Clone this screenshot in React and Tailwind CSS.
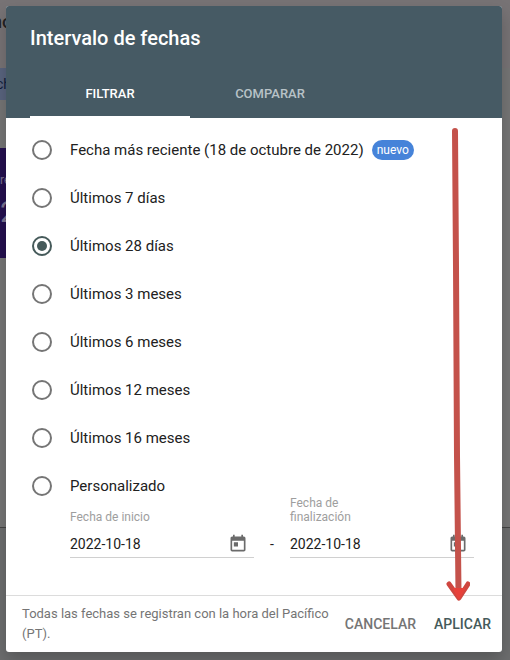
import React, { useState } from 'react';
import { MdToday } from 'react-icons/md';

const TABS = ['Filtrar', 'Comparar'];

const OPTIONS = [
    { id: 'latest', label: 'Fecha más reciente (18 de octubre de 2022)', badge: 'nuevo' },
    { id: '7d', label: 'Últimos 7 días' },
    { id: '28d', label: 'Últimos 28 días' },
    { id: '3m', label: 'Últimos 3 meses' },
    { id: '6m', label: 'Últimos 6 meses' },
    { id: '12m', label: 'Últimos 12 meses' },
    { id: '16m', label: 'Últimos 16 meses' },
    { id: 'custom', label: 'Personalizado' },
];

// The page scrolled partly out of view under the dialog
const PageBehind = () => (
    <div className="flex min-h-screen flex-col overflow-hidden bg-[#757575]" aria-hidden="true">
        <div className="-ml-2 flex h-[68px] items-start bg-[#777375] pt-2 text-lg font-medium text-[#222]">
            <span>no</span>
        </div>
        <div className="-ml-1 flex h-8 w-24 items-center bg-[#59647e] text-sm text-[#101c38]">ch</div>
        <div className="mt-12 h-[110px] w-40 bg-[#24104f] pt-6 text-[#7b7392]">
            <p className="text-xs leading-4">re</p>
            <p className="mt-2 text-3xl leading-8">2</p>
        </div>
        <div className="h-[270px] border-b border-[#444]" />
        <div className="grow bg-[#6c6d6e]" />
    </div>
);

const OptionRow = ({ option, checked, onSelect }) => (
    <label className="flex h-12 cursor-pointer items-center text-[15px] text-[#212121]">
        <input
            type="radio"
            name="range"
            checked={checked}
            onChange={() => onSelect(option.id)}
            className="mr-[18px] grid size-5 shrink-0 appearance-none place-items-center rounded-full border-2 border-[#757575] before:size-[10px] before:rounded-full checked:border-[#455a5a] checked:before:bg-[#455a5a]"
        />
        {option.label}
        {option.badge && (
            <span className="ml-2 flex h-5 items-center rounded-full bg-[#4683d9] px-[5px] text-xs text-white">
                {option.badge}
            </span>
        )}
    </label>
);

const DateField = ({ id, label, value, onChange }) => (
    <div className="min-w-0 flex-1">
        <label htmlFor={id} className="block max-w-[90px] text-xs leading-[14px] text-[#9e9e9e]">
            {label}
        </label>
        <div className="mt-[6px] flex h-7 items-center border-b border-[#d0d0d0] pr-[6px]">
            <input
                id={id}
                type="text"
                value={value}
                onChange={(e) => onChange(e.target.value)}
                className="min-w-0 grow bg-transparent text-sm text-[#212121] outline-none"
            />
            <button type="button" aria-label="Abrir calendario" className="shrink-0 text-[#6b6b6b]">
                <MdToday size={20} />
            </button>
        </div>
    </div>
);

// Hand drawn arrow pointing at the apply button
const Arrow = () => (
    <svg
        className="pointer-events-none absolute top-[120px] right-8 z-10"
        width="24"
        height="484"
        viewBox="0 0 24 484"
        fill="none"
        strokeLinecap="round"
        strokeLinejoin="round"
    >
        <path d="M9 5 L10 140 L11 330 L12.5 466" stroke="#c4524b" strokeWidth="6" />
        <path d="M3 458 L13 472 L22 458" stroke="#cf463f" strokeWidth="5" />
        <path d="M8 463 L13 472 L18 463 Z" fill="#e8413a" stroke="#e8413a" strokeWidth="2" />
    </svg>
);

const App = () => {
    const [tab, setTab] = useState('Filtrar');
    const [range, setRange] = useState('28d');
    const [start, setStart] = useState('2022-10-18');
    const [end, setEnd] = useState('2022-10-18');

    return (
        <div className="relative font-['Roboto',sans-serif]">
            <PageBehind />

            <div className="absolute inset-0 pt-[6px] pr-2 pl-[6px]">
                <div
                    role="dialog"
                    aria-labelledby="dialog-title"
                    className="relative rounded-[3px] bg-white shadow-[0_8px_16px_rgba(0,0,0,0.2)]"
                >
                    {/* Header */}
                    <header className="rounded-t-[3px] bg-[#465a64] px-6 text-white">
                        <h1 id="dialog-title" className="pt-[18px] text-xl leading-7 font-medium">
                            Intervalo de fechas
                        </h1>
                        <div role="tablist" className="mt-[18px] flex">
                            {TABS.map((name) => (
                                <button
                                    key={name}
                                    type="button"
                                    role="tab"
                                    aria-selected={tab === name}
                                    onClick={() => setTab(name)}
                                    className={`h-12 w-40 border-b-2 pt-[2px] text-[13px] font-medium uppercase ${
                                        tab === name ? 'border-white text-white' : 'border-transparent text-[#b8c2c7]'
                                    }`}
                                >
                                    {name}
                                </button>
                            ))}
                        </div>
                    </header>

                    {/* Ranges */}
                    <main className="pt-2 pr-7 pb-[37px] pl-[26px]">
                        {OPTIONS.map((option) => (
                            <OptionRow
                                key={option.id}
                                option={option}
                                checked={range === option.id}
                                onSelect={setRange}
                            />
                        ))}
                        <div className="-mt-[14px] flex items-end pl-[38px]">
                            <DateField id="start" label="Fecha de inicio" value={start} onChange={setStart} />
                            <span className="w-9 pb-1 text-center text-sm text-[#212121]">-</span>
                            <DateField id="end" label="Fecha de finalización" value={end} onChange={setEnd} />
                        </div>
                    </main>

                    {/* Footer */}
                    <footer className="flex items-center border-t border-[#dcdcdc] py-2 pr-[11px] pl-4">
                        <p className="grow text-[13px] leading-5 text-[#757575]">
                            Todas las fechas se registran con la hora del Pacífico (PT).
                        </p>
                        <div className="flex shrink-0 gap-[18px] pl-4 text-sm font-medium">
                            <button type="button" className="uppercase text-[#757575]">Cancelar</button>
                            <button type="button" className="uppercase text-[#455a5a]">Aplicar</button>
                        </div>
                    </footer>

                    <Arrow />
                </div>
            </div>
        </div>
    );
};

export default App;
